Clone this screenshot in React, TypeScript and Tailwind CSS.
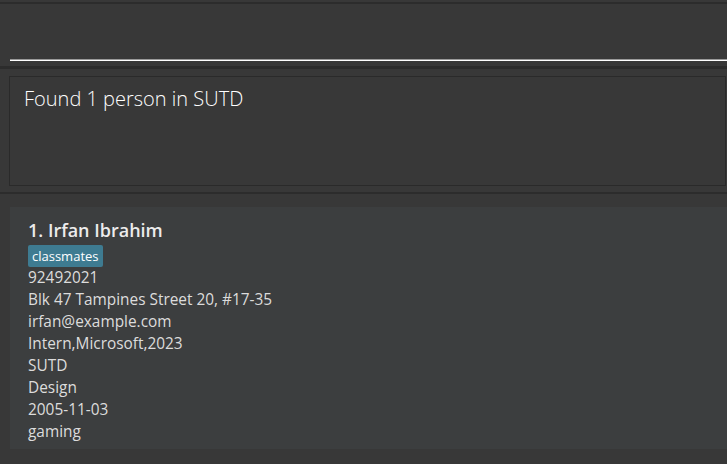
import React from 'react';

// Person card data shown in the list panel
const person = {
  index: 1,
  name: 'Irfan Ibrahim',
  tags: ['classmates'],
  fields: [
    '92492021',
    'Blk 47 Tampines Street 20, #17-35',
    'irfan@example.com',
    'Intern,Microsoft,2023',
    'SUTD',
    'Design',
    '2005-11-03',
    'gaming',
  ],
};

function CommandBox() {
  return (
    <div className="h-[62px] pl-[10px]">
      <div className="h-[55px]" />
      <div className="h-px bg-[#9a9a9a]" />
      <div className="h-px bg-white" />
    </div>
  );
}

function ResultDisplay() {
  return (
    <div className="pt-[7px] pb-[6px] pl-[9px] pr-px">
      <div className="h-[110px] border border-[#2a2a2a] bg-[#383838] px-[14px] pt-[8px]">
        <p className="text-[20px] font-light leading-7 text-white">
          Found 1 person in SUTD
        </p>
      </div>
    </div>
  );
}

function PersonCard() {
  return (
    <div className="ml-[10px] bg-[#3c3e3f] pl-[18px] pt-[9px] pb-[6px]">
      <h2 className="text-[18px] font-semibold leading-7 text-[#ececec]">
        {person.index}. {person.name}
      </h2>
      <div className="flex gap-1 pt-px">
        {person.tags.map((t) => (
          <span
            key={t}
            className="rounded-[2px] bg-[#3e7b91] px-[4px] text-[13px] leading-[22px] text-white"
          >
            {t}
          </span>
        ))}
      </div>
      <div className="text-[15.4px] leading-[22px] text-[#dcdcdc]">
        {person.fields.map((f) => (
          <div key={f}>{f}</div>
        ))}
      </div>
    </div>
  );
}

export default function App() {
  return (
    <div className="h-[464px] w-[727px] overflow-hidden bg-[#383838] font-['Open_Sans',sans-serif]">
      <div className="h-[2px]" />
      <div className="h-[2px] bg-[#2c2c2c]" />
      <CommandBox />
      <div className="h-[3px] bg-[#2c2c2c]" />
      <ResultDisplay />
      <div className="h-[2px] bg-[#2c2c2c]" />
      <div className="pt-[13px]">
        <PersonCard />
      </div>
    </div>
  );
}
